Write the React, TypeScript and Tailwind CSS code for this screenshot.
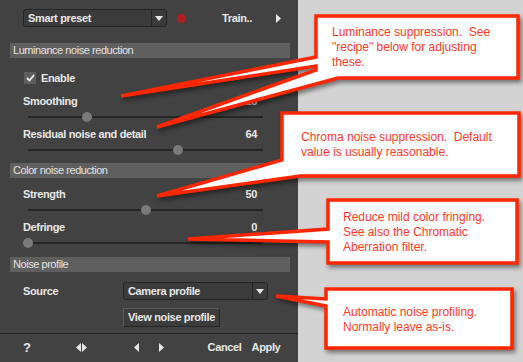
import * as React from "react";

const label = "font-bold text-[11px] tracking-[-0.35px] text-[#e8e8e8]";

function Header({ title }: { title: string }) {
  return (
    <div className="ml-[10px] w-[280px] h-[15px] bg-[#5f5f5f] flex items-center pl-[3px] text-[11px] tracking-[-0.45px] text-[#e2e2e2]">
      {title}
    </div>
  );
}

function Slider({ name, value, pct }: { name: string; value: string; pct: number }) {
  return (
    <div className="flex flex-col">
      <div className="h-[16px] flex items-center justify-between pl-[23px] pr-[41px]">
        <span className={label}>{name}</span>
        <span className={label}>{value}</span>
      </div>
      <div className="h-[16px] flex items-center pl-[28px]">
        <div className="relative w-[235px] h-[2px] bg-[#262626]">
          <div
            className="absolute top-[-4px] w-[10px] h-[10px] rounded-full bg-[#7a7a7a]"
            style={{ left: `calc(${pct}% - 5px)` }}
          />
        </div>
      </div>
    </div>
  );
}

function Caret() {
  return (
    <svg width="8" height="5" viewBox="0 0 8 5">
      <path d="M0 0 H8 L4 5 Z" fill="#e6e6e6" />
    </svg>
  );
}

function Tri({ dir }: { dir: "l" | "r" }) {
  return (
    <svg width="5" height="9" viewBox="0 0 5 9">
      <path d={dir === "r" ? "M0 0 L5 4.5 L0 9 Z" : "M5 0 L0 4.5 L5 9 Z"} fill="#e6e6e6" />
    </svg>
  );
}

const callouts = [
  "M316,16 H518 V78 H338 L157,127 L316,70 L316,66 L121,96 L316,57 Z",
  "M282,113 H519 V176 H300 L157,196 L282,160 Z",
  "M328,200 H517 V263 H328 V242 L188,239 L328,229 Z",
  "M326,289 H512 V348 H326 V306 L276,296 L326,299 Z",
];

const note = "absolute text-[12px] leading-[15px] text-[#ff3a1f] whitespace-pre";

export default function App() {
  return (
    <div
      className="relative w-[523px] h-[362px] bg-[#d3d3d3] overflow-hidden"
      style={{ fontFamily: '"Liberation Sans", Arial, sans-serif' }}
    >
      <div className="w-[298px] h-full bg-[#424242] flex flex-col">
        {/* top bar */}
        <div className="pt-[9px] flex items-center h-[27px]">
          <div className="ml-[23px] w-[144px] h-[18px] rounded-[3px] border border-[#252525] bg-[#3b3b3b] flex items-center">
            <span className={`${label} pl-[4px] flex-1`}>Smart preset</span>
            <div className="w-[15px] h-full border-l border-[#252525] flex items-center justify-center">
              <Caret />
            </div>
          </div>
          <div className="ml-[10px] w-[9px] h-[9px] rounded-full bg-[#b31d1d]" />
          <span className={`${label} ml-[36px]`}>Train..</span>
          <div className="ml-[24px]">
            <Tri dir="r" />
          </div>
        </div>

        <div className="mt-[16px]">
          <Header title="Luminance noise reduction" />
        </div>

        <div className="h-[20px] mt-[10px] flex items-center pl-[24px] gap-[5px]">
          <div className="w-[12px] h-[12px] bg-[#5e5e5e] flex items-center justify-center">
            <svg width="9" height="8" viewBox="0 0 9 8">
              <path d="M1 4 L3.5 6.5 L8 1" stroke="#f2f2f2" strokeWidth="1.8" fill="none" />
            </svg>
          </div>
          <span className={label}>Enable</span>
        </div>

        <div className="mt-[5px]">
          <Slider name="Smoothing" value="25" pct={25} />
        </div>
        <div className="mt-[1px]">
          <Slider name="Residual noise and detail" value="64" pct={64} />
        </div>

        <div className="mt-[5px]">
          <Header title="Color noise reduction" />
        </div>
        <div className="mt-[8px]">
          <Slider name="Strength" value="50" pct={50} />
        </div>
        <div className="mt-[1px]">
          <Slider name="Defringe" value="0" pct={0} />
        </div>

        <div className="mt-[6px]">
          <Header title="Noise profile" />
        </div>

        <div className="mt-[10px] flex items-center h-[18px]">
          <span className={`${label} pl-[23px] w-[123px]`}>Source</span>
          <div className="w-[145px] h-[18px] rounded-[3px] border border-[#252525] bg-[#3b3b3b] flex items-center">
            <span className={`${label} pl-[4px] flex-1`}>Camera profile</span>
            <div className="w-[15px] h-full border-l border-[#252525] flex items-center justify-center">
              <Caret />
            </div>
          </div>
        </div>

        <div className="mt-[8px] pl-[123px]">
          <div className="w-[97px] h-[19px] border border-[#262626] border-t-[#5a5a5a] border-l-[#5a5a5a] bg-[#3c3c3c] flex items-center pl-[4px]">
            <span className={label}>View noise profile</span>
          </div>
        </div>

        <div className="mt-[6px] h-[1px] bg-[#262626]" />
        <div className="flex-1 flex items-center pb-[1px]">
          <span className={`${label} ml-[23px] text-[13px]`}>?</span>
          <div className="ml-[45px] flex items-center gap-[1px]">
            <Tri dir="l" />
            <Tri dir="r" />
          </div>
          <div className="ml-[47px] flex items-center gap-[20px]">
            <Tri dir="l" />
            <Tri dir="r" />
          </div>
          <span className={`${label} ml-[44px]`}>Cancel</span>
          <span className={`${label} ml-[10px]`}>Apply</span>
        </div>
      </div>

      {/* callouts */}
      <svg
        className="absolute inset-0"
        width="523"
        height="362"
        viewBox="0 0 523 362"
        style={{ filter: "drop-shadow(2px 3px 2px rgba(0,0,0,0.45))" }}
      >
        {callouts.map((d, i) => (
          <path key={i} d={d} fill="#ffffff" stroke="#ff2600" strokeWidth="3.5" strokeLinejoin="miter" />
        ))}
      </svg>

      <div className={`${note} left-[332px] top-[25px]`}>
        {"Luminance suppression.  See\n\"recipe\" below for adjusting\nthese."}
      </div>
      <div className={`${note} left-[301px] top-[130px]`}>
        {"Chroma noise suppression.  Default\nvalue is usually reasonable."}
      </div>
      <div className={`${note} left-[343px] top-[210px]`}>
        {"Reduce mild color fringing.\nSee also the Chromatic\nAberration filter."}
      </div>
      <div className={`${note} left-[343px] top-[305px]`}>
        {"Automatic noise profiling.\nNormally leave as-is."}
      </div>
    </div>
  );
}
